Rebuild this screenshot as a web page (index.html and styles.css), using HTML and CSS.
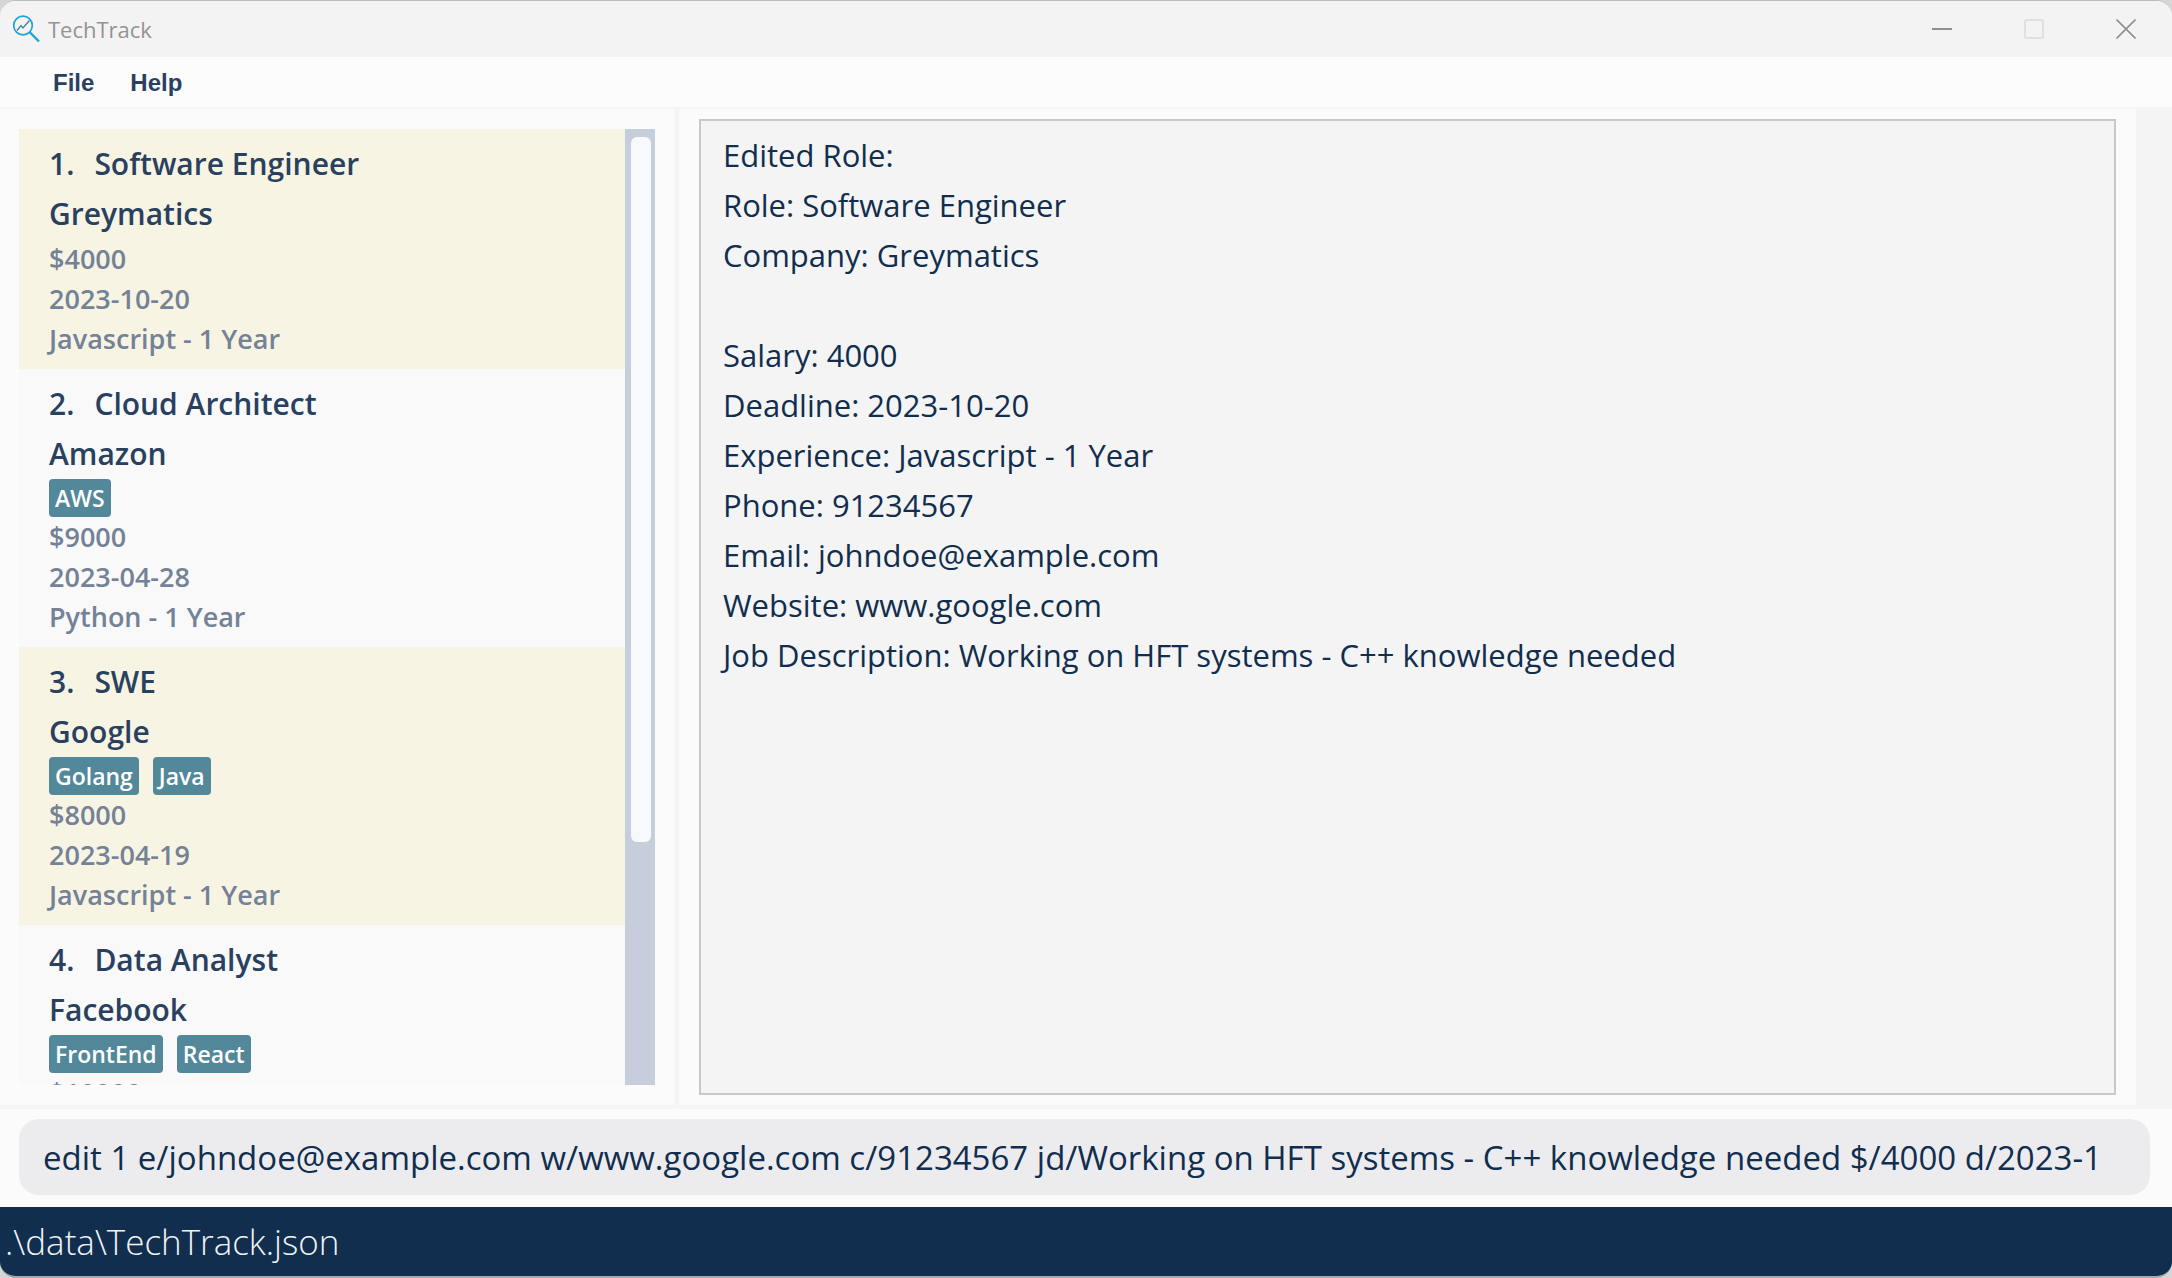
FILE: index.html
```html
<!DOCTYPE html>
<html lang="en">
<head>
<meta charset="utf-8">
<title>TechTrack</title>
<link rel="stylesheet" href="styles.css">
</head>
<body>
<div class="window">
  <header class="titlebar">
    <svg class="app-icon" viewBox="0 0 28 28" fill="none">
      <circle cx="11" cy="10.500" r="9.300" stroke="#1fa3dc" stroke-width="1.700"/>
      <path d="M5 15.500 9 10.500 11 13 17.500 5.500" stroke="#4a7f9c" stroke-width="1.400"/>
      <path d="M17.500 17 27 26.500" stroke="#1fa3dc" stroke-width="2.400"/>
    </svg>
    <h1 class="app-title">TechTrack</h1>
    <div class="controls">
      <button class="control" aria-label="Minimize"><svg viewBox="0 0 20 20"><path d="M0 10H20" stroke="#8f8f8f" stroke-width="2"/></svg></button>
      <button class="control" aria-label="Maximize" disabled><svg viewBox="0 0 20 20"><rect x="1" y="1" width="18" height="18" rx="1.500" fill="none" stroke="#e0e0e0" stroke-width="2"/></svg></button>
      <button class="control" aria-label="Close"><svg viewBox="0 0 20 20"><path d="M.5.5l19 19M19.500.5l-19 19" stroke="#8f8f8f" stroke-width="1.600"/></svg></button>
    </div>
  </header>
  <nav class="menubar">
    <button class="menu">File</button>
    <button class="menu">Help</button>
  </nav>
  <main class="split">
    <section class="list-pane">
      <ol class="cards">
        <li class="card">
          <h2 class="role"><span>1.</span><span>Software Engineer</span></h2>
          <p class="company">Greymatics</p>
          <p class="detail">$4000</p>
          <p class="detail">2023-10-20</p>
          <p class="detail">Javascript - 1 Year</p>
        </li>
        <li class="card">
          <h2 class="role"><span>2.</span><span>Cloud Architect</span></h2>
          <p class="company">Amazon</p>
          <div class="tags"><span class="tag">AWS</span></div>
          <p class="detail">$9000</p>
          <p class="detail">2023-04-28</p>
          <p class="detail">Python - 1 Year</p>
        </li>
        <li class="card">
          <h2 class="role"><span>3.</span><span>SWE</span></h2>
          <p class="company">Google</p>
          <div class="tags"><span class="tag">Golang</span><span class="tag">Java</span></div>
          <p class="detail">$8000</p>
          <p class="detail">2023-04-19</p>
          <p class="detail">Javascript - 1 Year</p>
        </li>
        <li class="card">
          <h2 class="role"><span>4.</span><span>Data Analyst</span></h2>
          <p class="company">Facebook</p>
          <div class="tags"><span class="tag">FrontEnd</span><span class="tag">React</span></div>
          <p class="detail">$10000</p>
        </li>
      </ol>
      <div class="track"><div class="thumb"></div></div>
    </section>
    <section class="result-pane">
      <div class="result">Edited Role:
Role: Software Engineer
Company: Greymatics

Salary: 4000
Deadline: 2023-10-20
Experience: Javascript - 1 Year
Phone: 91234567
Email: johndoe@example.com
Website: www.google.com
Job Description: Working on HFT systems - C++ knowledge needed</div>
    </section>
  </main>
  <div class="command-bar">
    <input class="command" type="text" aria-label="Command" value="edit 1 e/johndoe@example.com w/www.google.com c/91234567 jd/Working on HFT systems - C++ knowledge needed $/4000 d/2023-1">
  </div>
  <footer class="status">.\data\TechTrack.json</footer>
</div>
</body>
</html>
```
FILE: styles.css
```css
* { box-sizing: border-box; }

body {
  margin: 0;
  background: #d6d6d6;
  font-family: "Open Sans", "Noto Sans", sans-serif;
  color: #112e4e;
}

h1, h2, p, ol { margin: 0; padding: 0; font-size: inherit; font-weight: inherit; }
ol { list-style: none; }
button { border: 0; padding: 0; background: none; font: inherit; color: inherit; }

.window {
  display: flex;
  flex-direction: column;
  height: 100vh;
  border-top: 1px solid #bcbcbc;
  border-bottom: 2px solid #a4a8a8;
  border-radius: 16px;
  overflow: hidden;
  background: #f4f4f4;
}

.titlebar {
  display: flex;
  align-items: center;
  flex: none;
  height: 56px;
  padding-left: 12px;
  background: #f3f3f3;
}
.app-icon { width: 28px; height: 28px; }
.app-title { margin-left: 8px; font-size: 22px; color: #939393; }
.controls { display: flex; margin-left: auto; }
.control { display: flex; align-items: center; justify-content: center; width: 92px; height: 56px; }
.control svg { width: 20px; height: 20px; }

.menubar {
  display: flex;
  gap: 36px;
  flex: none;
  height: 52px;
  padding: 2px 0 0 53px;
  background: #fcfcfc;
  border-bottom: 2px solid #f4f5f6;
}
.menu { font: bold 24px "Liberation Sans", Arial, sans-serif; color: #29415f; }

.split { display: flex; flex: 1; min-height: 0; gap: 4px; padding-right: 36px; }
.list-pane { display: flex; flex: 0 0 675px; padding: 20px 20px 20px 19px; background: #fbfbfb; }
.cards { flex: 1; overflow: hidden; background: #f9f9f9; }
.card { padding: 10px 30px; font-weight: 600; color: #29415f; }
.card:nth-child(odd) { background: #f8f4e3; }
.role { display: flex; gap: 20px; }
.role, .company { font-size: 30px; line-height: 50px; }
.detail { font-size: 27px; line-height: 40px; color: #748297; }
.tags { display: flex; gap: 14px; }
.tag {
  padding: 0 6px;
  border-radius: 4px;
  background: #53889b;
  color: #fff;
  font-size: 23px;
  line-height: 38px;
}
.track { flex: 0 0 30px; padding: 8px 4px 8px 6px; background: #c7cedb; }
.thumb { height: 75%; border-radius: 6px; background: #f8f9fc; }

.result-pane { display: flex; flex: 1; padding: 10px 20px; background: #fbfbfb; }
.result {
  flex: 1;
  padding: 9px 22px;
  border: 2px solid #c8c8c8;
  background: #f4f4f4;
  font-size: 31px;
  line-height: 50px;
  white-space: pre-wrap;
}

.command-bar {
  flex: none;
  padding: 10px 22px 12px 19px;
  border-top: 4px solid #f4f5f7;
  background: #fbfbfb;
}
.command {
  display: block;
  width: 100%;
  height: 76px;
  padding: 0 22px 0 24px;
  border: 0;
  border-radius: 20px;
  background: #ececee;
  color: inherit;
  font: 33px "Open Sans", "Noto Sans", sans-serif;
}

.status {
  flex: none;
  height: 69px;
  padding-left: 5px;
  background: #112e4e;
  color: #f0f3f6;
  font-size: 35px;
  font-weight: 300;
  line-height: 69px;
}
```
